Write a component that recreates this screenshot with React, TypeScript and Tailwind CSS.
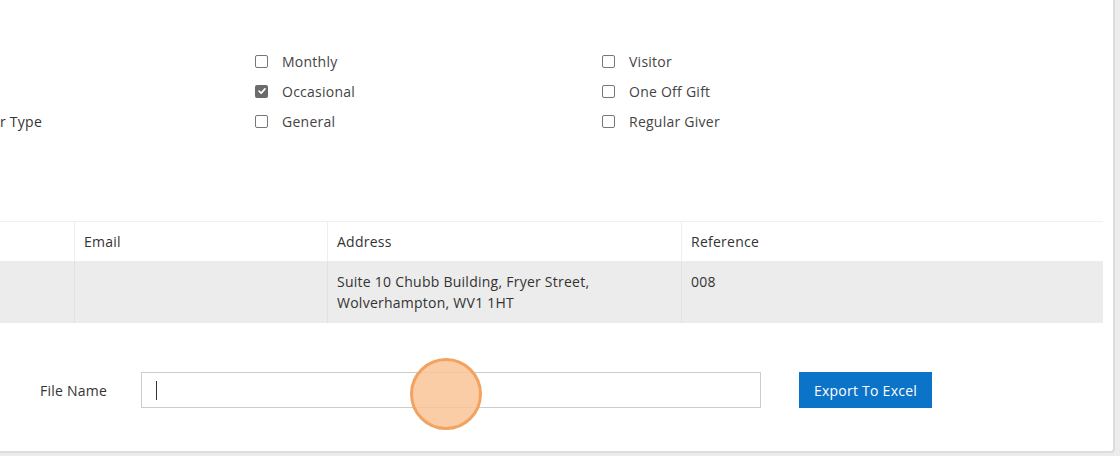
import React from 'react';

const checks = [
  ['Monthly', false, 'Visitor', false],
  ['Occasional', true, 'One Off Gift', false],
  ['General', false, 'Regular Giver', false],
] as const;

function Box({ on }: { on: boolean }) {
  return on ? (
    <span className="flex h-[13px] w-[13px] items-center justify-center rounded-[2px] bg-[#6b6b6b]">
      <svg viewBox="0 0 12 12" className="h-[10px] w-[10px]" fill="none" stroke="white" strokeWidth="2" strokeLinecap="round" strokeLinejoin="round">
        <path d="M2.5 6.2 L5 8.6 L9.6 3.4" />
      </svg>
    </span>
  ) : (
    <span className="block h-[13px] w-[13px] rounded-[2px] border border-[#767676] bg-white" />
  );
}

export default function App() {
  return (
    <div className="h-[456px] w-[1120px] overflow-hidden bg-[#ececec] font-['Open_Sans',sans-serif] text-[14px] tracking-[0.25px] text-[#333]">
      <div className="relative h-[453px] w-[1115px] rounded-br-[4px] border-r-2 border-b-2 border-[#dcdcdc] bg-white">
        {/* filter checkboxes */}
        <div className="flex pt-[46px]">
          <div className="flex w-[255px] flex-col">
            <div className="h-[30px]" />
            <div className="h-[30px]" />
            <div className="flex h-[30px] items-center">r Type</div>
          </div>
          <div className="flex w-[347px] flex-col">
            {checks.map(([label, on]) => (
              <div key={label} className="flex h-[30px] items-center gap-[14px] text-[#444]">
                <Box on={on} />
                <span>{label}</span>
              </div>
            ))}
          </div>
          <div className="flex flex-col">
            {checks.map(([, , label, on]) => (
              <div key={label} className="flex h-[30px] items-center gap-[14px] text-[#444]">
                <Box on={on} />
                <span>{label}</span>
              </div>
            ))}
          </div>
        </div>

        {/* results table */}
        <div className="mt-[85px] w-[1103px]">
          <div className="grid grid-cols-[75px_253px_354px_1fr] border-t border-[#f0f0f0]">
            <div className="h-[39px] border-r border-[#eee]" />
            <div className="flex h-[39px] items-center border-r border-[#eee] pl-[9px]">Email</div>
            <div className="flex h-[39px] items-center border-r border-[#eee] pl-[9px]">Address</div>
            <div className="flex h-[39px] items-center pl-[9px]">Reference</div>
          </div>
          <div className="grid grid-cols-[75px_253px_354px_1fr] bg-[#ececec] leading-[21px]">
            <div className="h-[62px] border-r border-[#e2e2e2]" />
            <div className="h-[62px] border-r border-[#e2e2e2]" />
            <div className="h-[62px] border-r border-[#e2e2e2] pl-[9px] pt-[10px]">
              Suite 10 Chubb Building, Fryer Street,
              <br />
              Wolverhampton, WV1 1HT
            </div>
            <div className="h-[62px] pl-[9px] pt-[10px]">008</div>
          </div>
        </div>

        {/* export */}
        <div className="mt-[49px] flex items-center">
          <label className="w-[141px] pl-[40px]">File Name</label>
          <div className="flex h-[36px] w-[620px] items-center border border-[#ccc] pl-[14px]">
            <span className="block h-[19px] w-px bg-[#333]" />
          </div>
          <button className="ml-[38px] h-[36px] w-[133px] bg-[#0b73c8] text-[14px] text-white">Export To Excel</button>
        </div>

        {/* click highlight */}
        <div className="absolute left-[410px] top-[358px] h-[72px] w-[72px] rounded-full border-[3px] border-[#f3a35f] bg-[#f9c497]/85" />
      </div>
    </div>
  );
}
